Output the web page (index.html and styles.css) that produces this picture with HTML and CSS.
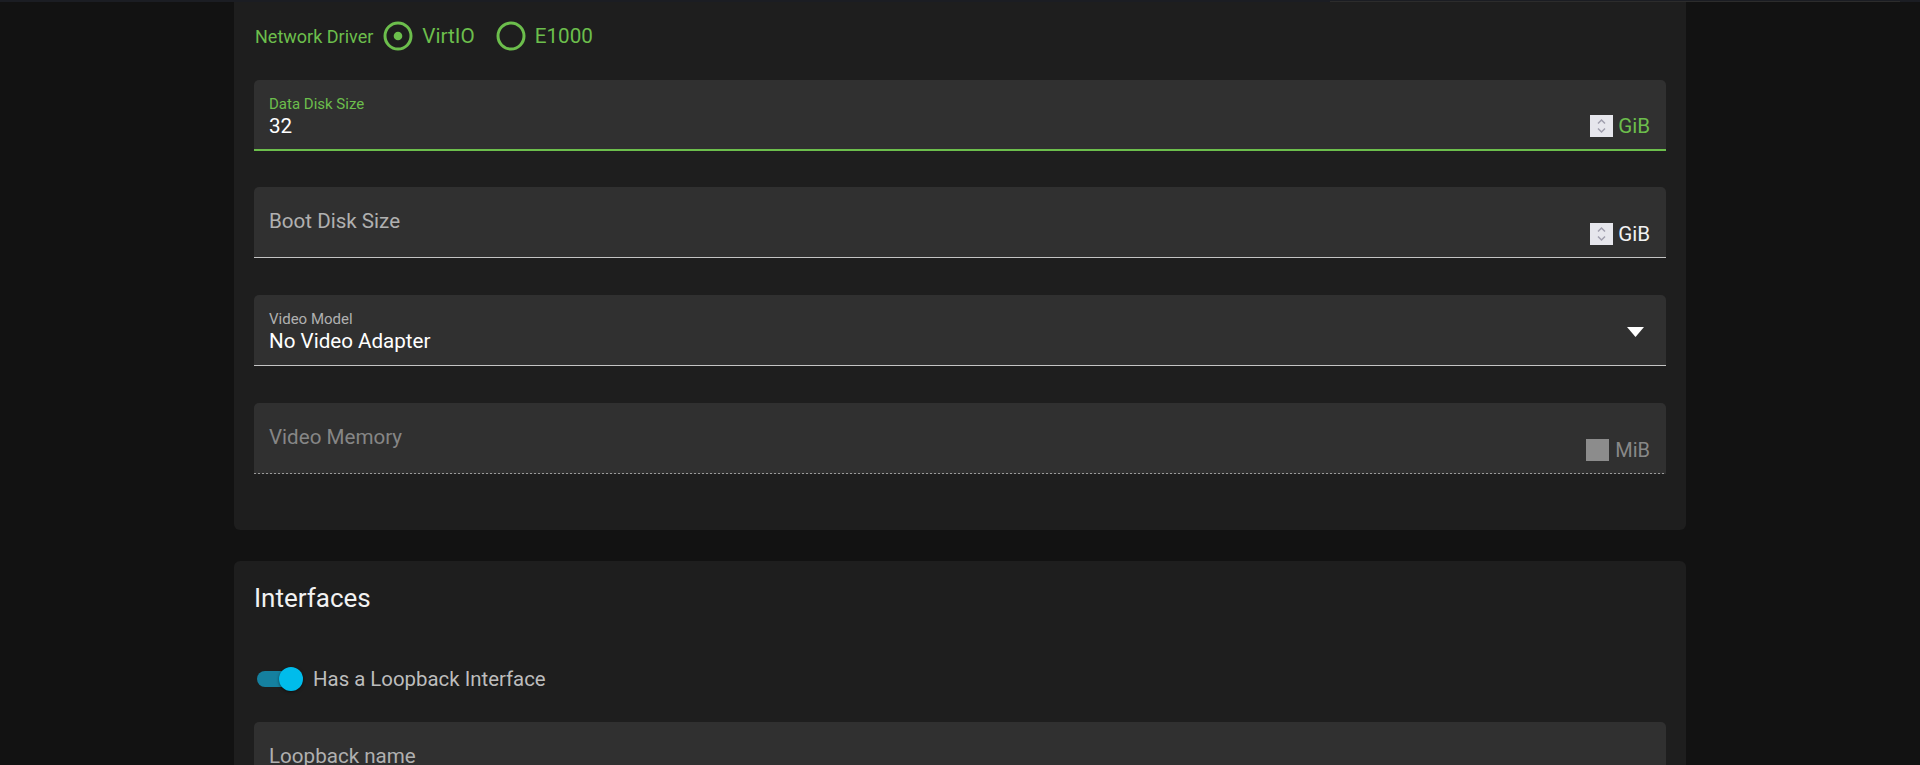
FILE: index.html
```html
<!DOCTYPE html>
<html lang="en">
<head>
<meta charset="utf-8">
<title>Node definition</title>
<link rel="stylesheet" href="styles.css">
</head>
<body>
<div class="topbar"><span class="topbar-glow"></span></div>
<main class="page">
  <section class="card card-first">
    <div class="radio-row">
      <span class="radio-title">Network Driver</span>
      <label class="radio-option">
        <svg class="radio-icon" width="30" height="30" viewBox="0 0 30 30"><circle cx="15" cy="15" r="13" fill="none" stroke="#6cbe4c" stroke-width="3"/><circle cx="15" cy="15" r="4.3" fill="#6cbe4c"/></svg>
        <span>VirtIO</span>
      </label>
      <label class="radio-option">
        <svg class="radio-icon" width="30" height="30" viewBox="0 0 30 30"><circle cx="15" cy="15" r="13" fill="none" stroke="#6cbe4c" stroke-width="3"/></svg>
        <span>E1000</span>
      </label>
    </div>

    <div class="field field-focused">
      <div class="field-main">
        <span class="field-label">Data Disk Size</span>
        <span class="field-value">32</span>
      </div>
      <div class="field-end">
        <span class="spinner"><svg width="23" height="22" viewBox="0 0 23 22"><path d="M8 8.5 L11.5 5 L15 8.5" fill="none" stroke="#a09fae" stroke-width="1.5"/><path d="M8 13.5 L11.5 17 L15 13.5" fill="none" stroke="#a09fae" stroke-width="1.5"/></svg></span>
        <span class="unit unit-green">GiB</span>
      </div>
    </div>

    <div class="field field-gap">
      <div class="field-main field-main-empty">
        <span class="placeholder">Boot Disk Size</span>
      </div>
      <div class="field-end">
        <span class="spinner"><svg width="23" height="22" viewBox="0 0 23 22"><path d="M8 8.5 L11.5 5 L15 8.5" fill="none" stroke="#a09fae" stroke-width="1.5"/><path d="M8 13.5 L11.5 17 L15 13.5" fill="none" stroke="#a09fae" stroke-width="1.5"/></svg></span>
        <span class="unit">GiB</span>
      </div>
    </div>

    <div class="field field-gap">
      <div class="field-main">
        <span class="field-label field-label-gray">Video Model</span>
        <span class="field-value">No Video Adapter</span>
      </div>
      <svg class="select-arrow" width="17" height="10" viewBox="0 0 17 10"><path d="M0 0 H17 L8.5 10 Z" fill="#ffffff"/></svg>
    </div>

    <div class="field field-gap field-disabled">
      <div class="field-main field-main-empty">
        <span class="placeholder placeholder-disabled">Video Memory</span>
      </div>
      <div class="field-end field-end-disabled">
        <span class="spinner spinner-disabled"></span>
        <span class="unit unit-disabled">MiB</span>
      </div>
    </div>
  </section>

  <section class="card card-second">
    <h2 class="card-title">Interfaces</h2>
    <div class="toggle-row">
      <span class="toggle"><span class="toggle-track"></span><span class="toggle-knob"></span></span>
      <span class="toggle-label">Has a Loopback Interface</span>
    </div>
    <div class="field">
      <div class="field-main field-main-empty">
        <span class="placeholder">Loopback name</span>
      </div>
    </div>
  </section>
</main>
</body>
</html>
```
FILE: styles.css
```css
html, body {
  margin: 0;
  padding: 0;
}
body {
  background: #121212;
  font-family: Roboto, "Liberation Sans", sans-serif;
  color: #ffffff;
  height: 765px;
  overflow: hidden;
}
.topbar {
  position: fixed;
  top: 0;
  left: 0;
  right: 0;
  height: 2px;
  background: #1b1d23;
  z-index: 5;
}
.topbar-glow {
  position: absolute;
  top: 1px;
  left: 1330px;
  width: 570px;
  height: 1px;
  background: #2c2c2c;
}
.page {
  padding-left: 234px;
  width: 1452px;
}
.card {
  background: #1e1e1e;
  border-radius: 6px;
  padding: 0 20px;
  box-sizing: border-box;
}
.card-first {
  border-radius: 0 0 6px 6px;
  padding-top: 21px;
  padding-bottom: 56px;
}
.card-second {
  margin-top: 31px;
  padding-top: 21px;
  padding-bottom: 40px;
}
.radio-row {
  display: flex;
  align-items: center;
  height: 30px;
  margin-bottom: 29px;
  color: #6cbe4c;
}
.radio-title {
  font-size: 18px;
  margin-left: 1px;
  margin-right: 10px;
}
.radio-option {
  display: flex;
  align-items: center;
  gap: 9px;
  margin-right: 21px;
  font-size: 20.7px;
}
.radio-icon {
  display: block;
}
.field {
  display: flex;
  height: 71px;
  box-sizing: border-box;
  padding: 0 16px 0 15px;
  background: #303030;
  border-radius: 5px 5px 0 0;
  border-bottom: 1px solid #c4c4c4;
}
.field-focused {
  border-bottom: 2px solid #6cbe4c;
}
.field-gap {
  margin-top: 37px;
}
.field-focused + .field-gap {
  margin-top: 36px;
}
.field-disabled {
  border-bottom: 1px dashed transparent;
  background-image: repeating-linear-gradient(90deg, #9a9a9a 0 2px, transparent 2px 4px);
  background-size: 100% 1px;
  background-position: 0 100%;
  background-repeat: no-repeat;
  background-color: #303030;
  background-origin: border-box;
  background-clip: border-box;
}
.field-main {
  flex: 1;
  display: flex;
  flex-direction: column;
  padding-top: 15px;
}
.field-main-empty {
  padding-top: 22px;
}
.field-label {
  font-size: 15px;
  line-height: 18px;
  color: #6cbe4c;
}
.field-label-gray {
  color: #b0b0b0;
}
.field-value {
  font-size: 20.6px;
  line-height: 24px;
  color: #ffffff;
  margin-top: 1px;
}
.placeholder {
  font-size: 20.6px;
  line-height: 24px;
  color: #b0b0b0;
}
.placeholder-disabled {
  color: #868686;
}
.field-end {
  align-self: flex-end;
  display: flex;
  align-items: center;
  gap: 5px;
  margin-bottom: 11px;
}
.field-end-disabled {
  gap: 6px;
  font-size: 20px;
}
.spinner {
  display: block;
  width: 23px;
  height: 22px;
  background: #e6e6ec;
}
.spinner svg {
  display: block;
}
.spinner-disabled {
  background: #8c8c8c;
}
.unit {
  font-size: 20.6px;
  line-height: 24px;
  color: #f2f2f2;
}
.unit-green {
  color: #6cbe4c;
}
.unit-disabled {
  font-size: 20px;
  color: #888888;
}
.select-arrow {
  align-self: flex-start;
  margin-top: 32px;
  margin-right: 6px;
}
.card-title {
  margin: 0;
  font-size: 26px;
  line-height: 32px;
  font-weight: 400;
  color: #f2f2f2;
}
.toggle-row {
  display: flex;
  align-items: center;
  height: 40px;
  margin-top: 45px;
  margin-bottom: 23px;
}
.toggle {
  position: relative;
  display: block;
  width: 46px;
  height: 24px;
  margin-left: 3px;
  margin-right: 10px;
}
.toggle-track {
  position: absolute;
  left: 0;
  top: 4px;
  width: 40px;
  height: 16px;
  border-radius: 8px;
  background: #15809f;
}
.toggle-knob {
  position: absolute;
  right: 0;
  top: 0;
  width: 24px;
  height: 24px;
  border-radius: 50%;
  background: #00bceb;
  box-shadow: 0 1px 3px rgba(0, 0, 0, 0.5);
}
.toggle-label {
  font-size: 20.4px;
  color: #bdbdbd;
}
```
